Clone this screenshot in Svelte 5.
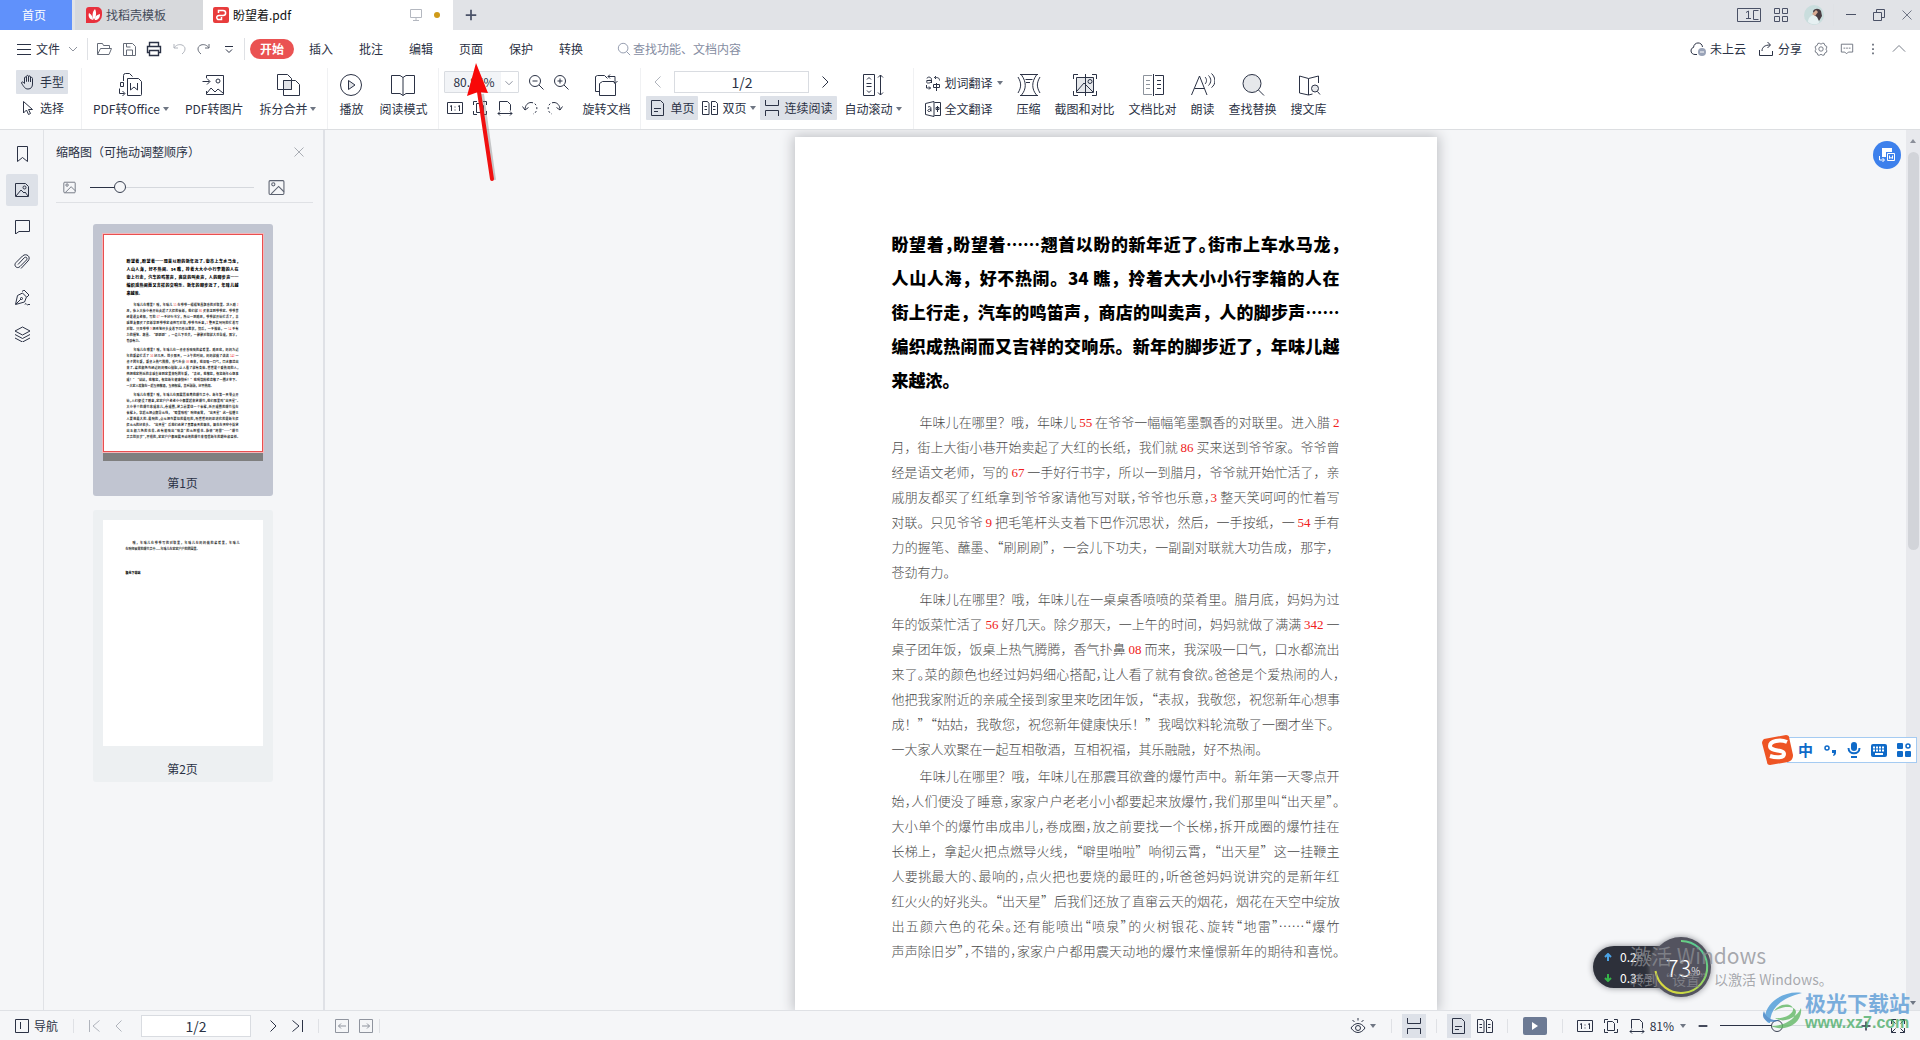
<script lang="ts">
  let zoom = $state(43);
  let thumbSize = $state(16);

  // Each icon is SVG markup on a 16 or 24 unit grid, drawn in currentColor.
  const icons: Record<string, string> = {
    menu: '<path d="M1 3.5h14M1 8.5h14M1 13.5h14"/>',
    down: '<path d="M4 6l4 4 4-4"/>',
    up: '<path d="M1 11l7-7 7 7"/>',
    folder: '<path d="M1.5 13.500V2.500h5l1 2h6v3M1.500 13.500l3-6h11l-2.500 6z"/>',
    save: '<path d="M2.500 2.500h9l3 3v9h-12zM5.500 14v-5h6v5M5.500 3v3h4"/>',
    print: '<path d="M3.500 5V1.500h9V5M3.500 11.500h-2v-6h13v6h-2M3.500 9.500h9v5h-9z" stroke-width="1.400"/>',
    undo: '<path d="M3 3v4h4M3 7c2-3 5-4 8-3 4 1.500 4 6 0 9"/>',
    redo: '<path d="M13 3v4h-4M13 7c-2-3-5-4-8-3-4 1.500-4 6 0 9"/>',
    more: '<path d="M4 5.500h8M5 8.500l3 3 3-3"/>',
    search: '<circle cx="7" cy="7" r="5.500"/><path d="M11 11l4 4"/>',
    cloud: '<path d="M7 13.500H5C0 13.500 0 7 3.500 6.500 4 0.500 12 0.500 12.500 6"/><circle cx="12" cy="11" r="4" fill="#99a3b8" stroke="none"/><path d="M10 11h4" stroke="#fff"/>',
    share: '<path d="M1.500 9v5.500h13V10M4 10c0-4 3-6 8-6M9.500 1l3 3-3 3"/>',
    gear: '<path d="M4.500 1.500h2l1.500 1 1.500-1h2l1 2.500 2 1v2l-1 1 1 1.500v2l-2 1-1 2.500h-2l-1.500-1-1.500 1h-2l-1-2.500-2-1v-2l1-1.500-1-1v-2l2-1z"/><circle cx="8" cy="8" r="2.500"/>',
    chat: '<path d="M1.500 2.500h13v9h-5l-2 2-2-2h-4zM4 7h2M7 7h2M10 7h2"/>',
    dots: '<path d="M8 2v2M8 7v2M8 12v2" stroke-width="2"/>',
    hand: '<path d="M4.500 9.500V4c0-1.500 2-1.500 2 0v3.500V2.500c0-1.500 2-1.500 2 0v5V3c0-1.500 2-1.500 2 0v5V4.500c0-1.500 2-1.500 2 0V10c0 3-1.500 5-4.500 5-3 0-4-2-6.500-6 0-1.500 1.500-1.500 3 .500z"/>',
    select: '<path d="M3.500 1.500v11.500l3-3 2 4.500 2-1-2-4h4z"/>',
    zoomOut: '<circle cx="7" cy="7" r="5.500"/><path d="M11 11l4.500 4.500M4.500 7h5"/>',
    zoomIn: '<circle cx="7" cy="7" r="5.500"/><path d="M11 11l4.500 4.500M4.500 7h5M7 4.500v5"/>',
    actual: '<path d="M.500 2.500h15v11h-15z"/><path d="M3 6.500l1.500-1V11M11 6.500l1.500-1V11M8 6.500v1M8 9.500v1"/>',
    fitPage: '<path d="M1.500 5V1.500H5M11 1.500h3.500V5M1.500 11v3.500H5M11 14.500h3.500V11M4.500 3.500h5l2 2v7h-7z"/>',
    fitWidth: '<path d="M2.500 10.500v-9h8l3 3v6M1 13.500h14M3 11.500l-2 2 2 2M13 11.500l2 2-2 2"/>',
    rotL: '<path d="M.500 6.500l2.500 3.500 3.500-2.500M3 10c0-5 3-7.500 6-7.500"/><path d="M9 2.500c7.500 0 7.500 10 2 11.500" stroke-dasharray="2 2"/>',
    rotR: '<path d="M15.500 6.500l-2.500 3.500-3.500-2.500M13 10c0-5-3-7.500-6-7.500"/><path d="M7 2.500c-7.500 0-7.500 10-2 11.500" stroke-dasharray="2 2"/>',
    single: '<path d="M1.500 .500h9l3 3v12h-12zM4 8.500h7M4 11.500h4"/>',
    double: '<path d="M.500 1.500h5l1.500 2v11h-6.500zM9.500 1.500h4l2 2v11h-6zM2.500 6.500h2.500M2.500 9.500h2.500M11 6.500h2.500M11 9.500h2.500"/>',
    scroll: '<path d="M1.500 0v5.500h13V0M1.500 16v-5.500h13V16"/>',
    prev: '<path d="M10.500 2.500L5 8l5.500 5.500"/>',
    next: '<path d="M5.500 2.500L11 8l-5.500 5.500"/>',
    first: '<path d="M2.500 2v12M12.500 2.500L6 8l6.500 5.500"/>',
    last: '<path d="M13.500 2v12M3.500 2.500L10 8l-6.500 5.500"/>',
    back: '<path d="M1.500 1.500h13v13h-13zM12 8H4.500M7 5.500L4.500 8 7 10.500"/>',
    forward: '<path d="M1.500 1.500h13v13h-13zM4 8h7.500M9 5.500L11.500 8 9 10.500"/>',
    word: '<path d="M1.500 5.500h5v-1c0-3-4.500-3-4.500-1M6.500 5v3M6.500 5.500c-6-1-6 3-3 2.500 2 0 3-1 3-2M11 1L9.500 2.500 11 4M9.500 2.500c3 0 5 0 5 3M1.500 10v3h4M4 11.500L5.500 13 4 14.500M8.500 9.500h6v3h-6zM11.500 8v8"/>',
    full: '<path d="M9.500 1.500h6v13h-6M9 .500L.500 2.500v11l8.500 2zM3 6c3-1 3 0 3 4.500M6 8c-4 0-4 3-1.500 2.500L6 9M11 6.500h3v2h-3zM12.500 5v6"/>',
    nav: '<path d="M1.500 1.500h13v13h-13zM6.500 4v7"/>',
    eye: '<path d="M1 10c4-6 10-6 14 0-4 6-10 6-14 0zM8 0v2.500M2.500 2l2 2M13.500 2l-2 2"/><circle cx="8" cy="10" r="2.500"/>',
    bookmark: '<path d="M3.500 .500h10v15l-5-4-5 4z"/>',
    picture: '<path d="M1.500 1.500h10l3 3v10h-13zM2 14l5-6 3 3 1-1 3 4"/><circle cx="10.500" cy="5.500" r="1.500"/>',
    image: '<rect x="1" y="1.500" width="14" height="13" rx="1"/><path d="M3 14l7-7 5 5"/><circle cx="5" cy="5" r="1.500"/>',
    comment: '<path d="M1.500 2.500h14v11H5l-3.500 2.500z"/>',
    clip: '<path d="M4 10.500L10 4c2-2 4 0 2.500 2L6 12.500c-3 3-7-1-4-4L8.500 2c4-3.500 9 1 5.500 5l-7 7.500"/>',
    pen: '<path d="M1.500 14.500l2-9 5-2.500 4 4-2 5zM8 1.500l2-1.500 5 5-2 2M2 14l5-5M11 14.500c1-3 2 2 3 0h2"/><circle cx="7.500" cy="8.500" r="1"/>',
    layers: '<path d="M8.500 1l7.500 4-7.500 4L1 5zM1 8.500l7.500 4 7.500-4M1 12l7.500 4 7.500-4"/>',
    close: '<path d="M2 2l12 12M14 2L2 14"/>',
    monitor: '<path d="M2.500 2.500h11v8h-11zM8 10.500v3M5 13.500h6"/>',
    plus: '<path d="M8 2v12M2 8h12" stroke-width="2"/>',
    minus: '<path d="M3 8h10" stroke-width="2"/>',
    min: '<path d="M3 7.500h10"/>',
    restore: '<path d="M2.500 5.500h8v8h-8zM5.500 5V2.500h8v8H11"/>',
    grid: '<path d="M1.500 1.500h5v5h-5zM9.500 1.500h5v5h-5zM1.500 9.500h5v5h-5zM9.500 9.500h5v5h-5z"/>',
    expand: '<path d="M1.500 6V1.500H6M1.500 1.500l4 4M10 1.500h4.500V6M14.500 1.500l-4 4M1.500 10v4.500H6M1.500 14.500l4-4M10 14.500h4.500V10M14.500 14.500l-4-4"/>',
    office: '<path d="M8.500 5.500h11l3 3v13a1 1 0 0 1-1 1h-13zM11.500 10v7l3.500-3 3.500 3v-7M4.500 8V2.500a2 2 0 0 1 2-2h4l3 3M4.500 9.500h-3v4h3zM.500 15.500v5h5M3.500 18l2.500 2.500L3.500 23"/>',
    toImage: '<path d="M4.500 5V2.500h17v19h-17V18M.500 8.500h7M5 5.500l3 3-3 3M5 20l4-5 4 4 3-3 5 4"/><circle cx="16" cy="8" r="2"/>',
    split: '<path d="M1.500 1.500h10l4 4v11h-14z"/><path d="M7.500 7.500h12l4 4v11h-16z"/><path d="M7.500 7.500h8v9h-8z" fill="#e2e4e8"/>',
    play: '<circle cx="12" cy="12" r="10.500"/><path d="M9.500 7.500l6.500 4.500-6.500 4.500z" fill="#e2e4e8"/>',
    book: '<path d="M.500 2.500H9l3 2 3-2h8.500v18H15l-3 2-3-2H.500zM12 4.500v18"/>',
    rotate: '<path d="M5 18.500H1.500v-15l2-1h7l3 3M5.500 10.500l3-2h11l2 2v12h-16zM16 1.500l-2 2 2 2M14 3.500h7v7M19 8l2 2.500L23.500 8"/>',
    autoScroll: '<path d="M2.500 1.500h11v21h-11zM5.500 10.500h5M5.500 13.500h5M6 6.500L8 4.500l2 2M6 17.500l2 2 2-2M19.500 2v20M17 4.500l2.500-2.500L22 4.500M17 19.500l2.500 2.500 2.500-2.500"/>',
    compress: '<path d="M3 1.500h18M3 22.500h18M4.500 2c5 7 5 14 0 20M19.500 2c-5 7-5 14 0 20M1 4c3.500 6 3.500 10 0 16M23 4c-3.500 6-3.500 10 0 16M8.500 6.500h7M9 9.500h4"/>',
    compare: '<path d="M3.500 4.500h17v15h-17z" fill="#e6e8eb"/><path d="M.500 6V1.500H5M19 1.500h4.500V6M.500 18v4.500H5M19 22.500h4.500V18M12.500 1v22M4 18l7-8 5 5 4 4"/><circle cx="17" cy="8.500" r="2"/>',
    docDiff: '<path d="M11 2.500H2.500v19H11M5 7.500h4M5 11.500h4M5 15.500h4" stroke="#8d939c"/><path d="M12.500 1v22M14 2.500h8.500v19H14M16 7.500h4M16 11.500h4M16 15.500h4"/>',
    read: '<path d="M.500 22L8.500 3l7.500 19M3.500 15.500h10M14 4c2 2 2 5 0 7M17.500 2.500c3 3 3 7 0 10M20.500 .500c4.500 4 4.500 11 0 14"/>',
    find: '<circle cx="11" cy="10.500" r="9" fill="#e6e8eb"/><path d="M17.500 17l5.500 5.500"/>',
    library: '<path d="M11.500 5.500l-9-2.500v17l9 2zM11.500 5.500l10-2.500v7M11.500 22l4-1"/><circle cx="18" cy="15.500" r="3.500" fill="#e6e8eb"/><path d="M20.500 18.500l2.500 3"/>'
  };

  type Line = { t: string; tight?: boolean; first?: boolean; last?: boolean };
  const heading: Line[] = [
    { t: '盼望着，盼望着……翘首以盼的新年近了。街市上车水马龙，', tight: true },
    { t: '人山人海，好不热闹。34 瞧，拎着大大小小行李箱的人在' },
    { t: '街上行走，汽车的鸣笛声，商店的叫卖声，人的脚步声……' },
    { t: '编织成热闹而又吉祥的交响乐。新年的脚步近了，年味儿越' },
    { t: '来越浓。', last: true }
  ];
  const paragraphs: Line[][] = [
    [
      { t: '年味儿在哪里？哦，年味儿 55 在爷爷一幅幅笔墨飘香的对联里。进入腊 2', first: true },
      { t: '月，街上大街小巷开始卖起了大红的长纸，我们就 86 买来送到爷爷家。爷爷曾' },
      { t: '经是语文老师，写的 67 一手好行书字，所以一到腊月，爷爷就开始忙活了，亲' },
      { t: '戚朋友都买了红纸拿到爷爷家请他写对联，爷爷也乐意，3 整天笑呵呵的忙着写', tight: true },
      { t: '对联。只见爷爷 9 把毛笔杆头支着下巴作沉思状，然后，一手按纸，一 54 手有' },
      { t: '力的握笔、蘸墨、“刷刷刷”，一会儿下功夫，一副副对联就大功告成，那字，' },
      { t: '苍劲有力。', last: true }
    ],
    [
      { t: '年味儿在哪里？哦，年味儿在一桌桌香喷喷的菜肴里。腊月底，妈妈为过', first: true },
      { t: '年的饭菜忙活了 56 好几天。除夕那天，一上午的时间，妈妈就做了满满 342 一' },
      { t: '桌子团年饭，饭桌上热气腾腾，香气扑鼻 08 而来，我深吸一口气，口水都流出' },
      { t: '来了。菜的颜色也经过妈妈细心搭配，让人看了就有食欲。爸爸是个爱热闹的人，', tight: true },
      { t: '他把我家附近的亲戚全接到家里来吃团年饭，“表叔，我敬您，祝您新年心想事' },
      { t: '成！”“姑姑，我敬您，祝您新年健康快乐！”我喝饮料轮流敬了一圈才坐下。' },
      { t: '一大家人欢聚在一起互相敬酒，互相祝福，其乐融融，好不热闹。', last: true }
    ],
    [
      { t: '年味儿在哪里？哦，年味儿在那震耳欲聋的爆竹声中。新年第一天零点开', first: true },
      { t: '始，人们便没了睡意，家家户户老老小小都要起来放爆竹，我们那里叫“出天星”。', tight: true },
      { t: '大小单个的爆竹串成串儿，卷成圈，放之前要找一个长梯，拆开成圈的爆竹挂在', tight: true },
      { t: '长梯上，拿起火把点燃导火线，“噼里啪啦”响彻云霄，“出天星”这一挂鞭主' },
      { t: '人要挑最大的、最响的，点火把也要烧的最旺的，听爸爸妈妈说讲究的是新年红', tight: true },
      { t: '红火火的好兆头。“出天星”后我们还放了直窜云天的烟花，烟花在天空中绽放' },
      { t: '出五颜六色的花朵。还有能喷出“喷泉”的火树银花、旋转“地雷”……“爆竹', tight: true },
      { t: '声声除旧岁”，不错的，家家户户都用震天动地的爆竹来憧憬新年的期待和喜悦。', tight: true }
    ]
  ];
  const menus = ['插入', '批注', '编辑', '页面', '保护', '转换'];
  const rail = [
    ['bookmark', '书签'],
    ['picture', '缩略图'],
    ['comment', '批注'],
    ['clip', '附件'],
    ['pen', '签名'],
    ['layers', '图层']
  ];
</script>

{#snippet icon(name: string, size = 16, grid = 16)}
  <svg width={size} height={size} viewBox="0 0 {grid} {grid}" fill="none" stroke="currentColor" aria-hidden="true">{@html icons[name]}</svg>
{/snippet}

{#snippet caret()}
  <svg width="6" height="4" viewBox="0 0 6 4" aria-hidden="true"><path d="M0 0h6L3 4z" fill="#6f7683" /></svg>
{/snippet}

{#snippet tool(name: string, label: string, drop = false)}
  <button class="tool">
    {@render icon(name, 24, 24)}
    <span class="tool-label">{label}{#if drop}{@render caret()}{/if}</span>
  </button>
{/snippet}

{#snippet lineText(l: Line)}
  <span class="line" class:tight={l.tight} class:first={l.first} class:last={l.last}>
    {#each l.t.split(/(\d+)/) as part}{#if /^\d/.test(part)}<span class="num">{part}</span>{:else}{part}{/if}{/each}
  </span>
{/snippet}

{#snippet article()}
  <h1>{#each heading as l}{@render lineText(l)}{/each}</h1>
  {#each paragraphs as p}
    <p>{#each p as l}{@render lineText(l)}{/each}</p>
  {/each}
{/snippet}

<div class="app">
  <header>
    <div class="titlebar">
      <button class="tab home">首页</button>
      <button class="tab templates">
        <svg width="16" height="16" viewBox="0 0 16 16" aria-hidden="true">
          <path d="M3 0h8a5 5 0 0 1 5 5v3a8 8 0 0 1-8 8H0V3a3 3 0 0 1 3-3z" fill="#e8303c" />
          <path d="M8 13C6 10 6 5 9 2c2 4 1 8-1 11zM7 13C3 12 2 9 3 6c3 2 4 4 4 7zM9 13c0-3 1-5 5-6 0 4-2 6-5 6z" fill="#fff" />
        </svg>
        找稻壳模板
      </button>
      <button class="tab doc">
        <svg width="16" height="16" viewBox="0 0 16 16" aria-hidden="true">
          <rect width="16" height="16" rx="2" fill="#e83c3c" />
          <path d="M5.500 6V3.500H10c3.500 0 3.500 5 0 5H6c-3.500 0-2.500 4.500 0 4h2.500V10" fill="none" stroke="#fff" stroke-width="1.500" />
        </svg>
        <span class="doc-name">盼望着.pdf</span>
        <span class="tab-monitor">{@render icon('monitor')}</span>
        <span class="unsaved"></span>
      </button>
      <button class="add" aria-label="新建标签">{@render icon('plus', 14)}</button>
      <div class="window-tools">
        <button class="layout-button" aria-label="窗口布局">
          <svg width="24" height="14" viewBox="0 0 24 14" fill="none" stroke="currentColor" aria-hidden="true">
            <path d="M.5.5h23v13H.5zM21.500 2.500h-5v9h5M9 4.500l2.500-1.500v7.500M9 10.500h5" />
          </svg>
        </button>
        <button aria-label="应用">{@render icon('grid')}</button>
        <svg class="avatar" width="20" height="20" viewBox="0 0 20 20" aria-hidden="true">
          <circle cx="10" cy="10" r="10" fill="#c9dddd" />
          <path d="M4 17c0-4 3-7 6-7l4 2 1 6a10 10 0 0 1-11-1z" fill="#e6f0f2" />
          <path d="M9 6c2-3 6-3 8 0l1 5-3 5-2-4-3-2z" fill="#493c42" />
          <path d="M8 9l4-4 2 2-3 4z" fill="#d8a992" />
        </svg>
        <i class="sep"></i>
        <button class="win" aria-label="最小化">{@render icon('min')}</button>
        <button class="win" aria-label="还原">{@render icon('restore')}</button>
        <button class="win" aria-label="关闭">{@render icon('close', 12)}</button>
      </div>
    </div>

    <nav class="menubar">
      <button class="file">{@render icon('menu')}<span>文件</span><span class="muted">{@render icon('down')}</span></button>
      <i class="sep"></i>
      <div class="quick">
        <button class="mid" aria-label="打开">{@render icon('folder')}</button>
        <button class="mid" aria-label="保存">{@render icon('save')}</button>
        <button aria-label="打印">{@render icon('print')}</button>
        <button class="faint" aria-label="撤销">{@render icon('undo')}</button>
        <button class="mid" aria-label="重做">{@render icon('redo')}</button>
        <button aria-label="更多">{@render icon('more')}</button>
      </div>
      <i class="sep"></i>
      <button class="active-menu">开始</button>
      {#each menus as m}<button class="menu">{m}</button>{/each}
      <label class="search">{@render icon('search', 14)}<input placeholder="查找功能、文档内容" aria-label="查找功能、文档内容" /></label>
      <div class="account">
        <button class="cloud">{@render icon('cloud')}未上云</button>
        <button class="share">{@render icon('share')}分享</button>
        <button class="mid" aria-label="设置">{@render icon('gear', 14)}</button>
        <button class="mid" aria-label="反馈">{@render icon('chat', 14)}</button>
        <button class="mid" aria-label="更多选项">{@render icon('dots', 14)}</button>
        <button class="mid" aria-label="收起功能区">{@render icon('up', 14)}</button>
      </div>
    </nav>

    <div class="ribbon">
      <div class="group modes">
        <button class="chip on">{@render icon('hand')}手型</button>
        <button class="chip">{@render icon('select')}选择</button>
      </div>
      <div class="group">
        {@render tool('office', 'PDF转Office', true)}
        {@render tool('toImage', 'PDF转图片')}
        {@render tool('split', '拆分合并', true)}
      </div>
      <div class="group">
        {@render tool('play', '播放')}
        {@render tool('book', '阅读模式')}
      </div>
      <div class="group view">
        <div class="stack">
          <div class="row zoom-row">
            <div class="zoom-box">
              <select aria-label="缩放比例"><option>80.86%</option></select>
              <span class="zoom-arrow">{@render icon('down', 14)}</span>
            </div>
            <button aria-label="缩小">{@render icon('zoomOut')}</button>
            <button aria-label="放大">{@render icon('zoomIn')}</button>
          </div>
          <div class="row fit-row">
            <button aria-label="实际大小">{@render icon('actual')}</button>
            <button aria-label="适合页面">{@render icon('fitPage')}</button>
            <button aria-label="适合宽度">{@render icon('fitWidth')}</button>
            <button aria-label="向左旋转">{@render icon('rotL')}</button>
            <button aria-label="向右旋转">{@render icon('rotR')}</button>
          </div>
        </div>
        {@render tool('rotate', '旋转文档')}
      </div>
      <div class="group paging">
        <div class="stack">
          <div class="row page-row">
            <button class="faint" aria-label="上一页">{@render icon('prev')}</button>
            <input class="page-input" value="1/2" aria-label="页码" />
            <button aria-label="下一页">{@render icon('next')}</button>
          </div>
          <div class="row">
            <button class="chip on">{@render icon('single')}单页</button>
            <button class="chip">{@render icon('double')}双页{@render caret()}</button>
            <button class="chip on">{@render icon('scroll')}连续阅读</button>
          </div>
        </div>
        {@render tool('autoScroll', '自动滚动', true)}
      </div>
      <div class="group last-group">
        <div class="stack translate">
          <button class="inline">{@render icon('word')}划词翻译{@render caret()}</button>
          <button class="inline">{@render icon('full')}全文翻译</button>
        </div>
        {@render tool('compress', '压缩')}
        {@render tool('compare', '截图和对比')}
        {@render tool('docDiff', '文档比对')}
        {@render tool('read', '朗读')}
        {@render tool('find', '查找替换')}
        {@render tool('library', '搜文库')}
      </div>
    </div>
  </header>

  <div class="workspace">
    <nav class="rail" aria-label="侧栏">
      {#each rail as [name, label], i}
        <button class:on={i === 1} aria-label={label}>{@render icon(name)}</button>
      {/each}
    </nav>

    <aside class="panel">
      <div class="panel-head">
        <span>缩略图（可拖动调整顺序）</span>
        <button class="muted" aria-label="关闭侧栏">{@render icon('close', 12)}</button>
      </div>
      <div class="size-row">
        {@render icon('image', 13)}
        <input type="range" class="thin" bind:value={thumbSize} style="--fill: {thumbSize}%" aria-label="缩略图大小" />
        {@render icon('image', 17)}
      </div>
      <div class="thumbs">
        <button class="thumb current" aria-label="第1页">
          <span class="sheet outlined"><span class="mini">{@render article()}</span></span>
          <span class="strip"></span>
          <span class="caption">第1页</span>
        </button>
        <button class="thumb" aria-label="第2页">
          <span class="sheet"><span class="mini second">
            <span class="line first">哦，年味儿在爷爷写的对联里，年味儿在妈妈做的菜肴里，年味儿</span>
            <span class="line last">在响彻云霄的爆竹声中——年味儿在家家户户的团圆里。</span>
            <b class="sign">极光下载站</b>
          </span></span>
          <span class="caption">第2页</span>
        </button>
      </div>
    </aside>

    <main class="canvas">
      <article class="page">{@render article()}</article>
      <button class="convert" aria-label="转换文档">
        <svg width="16" height="16" viewBox="0 0 16 16" fill="none" stroke="#fff" aria-hidden="true">
          <path d="M3 1h10v4H7v5H3z" fill="#fff" stroke="none" />
          <path d="M8.500 6.500h7v7h-7zM10.500 8.500v3l1.500-1 1.500 1v-3M.500 9v4H5M3.500 11L5.500 13l-2 2" />
        </svg>
      </button>
    </main>

    <div class="scrollbar" aria-hidden="true">
      <svg width="6" height="4" viewBox="0 0 6 4"><path d="M0 4h6L3 0z" fill="#8b8f99" /></svg>
      <span class="grip"></span>
      {@render caret()}
    </div>
  </div>

  <footer>
    <button class="nav-button">{@render icon('nav')}导航</button>
    <i class="sep"></i>
    <div class="pager">
      <button class="faint" aria-label="第一页">{@render icon('first')}</button>
      <button class="faint" aria-label="前一页">{@render icon('prev')}</button>
      <input class="page-input" value="1/2" aria-label="当前页" />
      <button aria-label="后一页">{@render icon('next')}</button>
      <button aria-label="最后一页">{@render icon('last')}</button>
    </div>
    <i class="sep"></i>
    <div class="history">
      <button class="muted" aria-label="后退">{@render icon('back')}</button>
      <button class="muted" aria-label="前进">{@render icon('forward')}</button>
    </div>
    <i class="sep"></i>
    <div class="status-right">
      <button class="eye-button" aria-label="护眼模式">{@render icon('eye')}{@render caret()}</button>
      <i class="sep"></i>
      <button class="square on" aria-label="连续阅读">{@render icon('scroll')}</button>
      <i class="sep"></i>
      <div class="pair">
        <button class="square on" aria-label="单页">{@render icon('single')}</button>
        <button class="square" aria-label="双页">{@render icon('double')}</button>
      </div>
      <i class="sep"></i>
      <button class="present" aria-label="播放"><svg width="8" height="8" viewBox="0 0 8 8" aria-hidden="true"><path d="M1 0l6 4-6 4z" fill="#fff" /></svg></button>
      <i class="sep"></i>
      <div class="fits">
        <button aria-label="实际大小">{@render icon('actual')}</button>
        <button aria-label="适合页面">{@render icon('fitPage')}</button>
        <button aria-label="适合宽度">{@render icon('fitWidth')}</button>
      </div>
      <button class="percent">81%{@render caret()}</button>
      <button aria-label="缩小">{@render icon('minus', 14)}</button>
      <input type="range" class="zoom-range" bind:value={zoom} style="--fill: {zoom}%" aria-label="缩放" />
      <button aria-label="放大">{@render icon('plus', 12)}</button>
      <button class="expand" aria-label="全屏">{@render icon('expand')}</button>
    </div>
  </footer>

  <svg class="pointer" width="48" height="132" viewBox="0 0 48 132" aria-hidden="true">
    <path d="M16 32l12 86" stroke="#7d7d7d" stroke-opacity=".4" stroke-width="4" />
    <path d="M13 30l13 87" stroke="#f01010" stroke-width="4" stroke-linecap="round" />
    <path d="M10 1L1 34l11-4 10 1z" fill="#f80808" />
  </svg>

  <div class="ime">
    <svg class="ime-logo" width="32" height="32" viewBox="0 0 32 32" aria-hidden="true">
      <path d="M3 5L25 1c2 0 3 1 3 2l4 18c0 4-2 6-5 7L9 31c-2 0-3-1-3-3L1 9c0-2 1-3 2-4z" fill="#ee5424" />
      <path d="M26 8c-7-3-17-1-17 4 0 6 14 3 14 8 0 4-8 4-14 2" fill="none" stroke="#fff" stroke-width="4" />
    </svg>
    <div class="ime-bar">
      <button class="ime-mode">中</button>
      <button aria-label="标点"><svg width="14" height="14" viewBox="0 0 14 14" aria-hidden="true"><circle cx="4" cy="5" r="2" fill="none" stroke="#0f6ac8" stroke-width="1.500" /><path d="M9 7h4v3c0 2-2 3-3 3l1-3H9z" fill="#0f6ac8" /></svg></button>
      <button aria-label="语音"><svg width="14" height="16" viewBox="0 0 14 16" fill="none" stroke="#0f6ac8" stroke-width="2" aria-hidden="true"><rect x="4" y="0" width="6" height="9" rx="3" fill="#0f6ac8" stroke="none" /><path d="M1.500 6c0 7 11 7 11 0M4 15h6" /></svg></button>
      <button aria-label="键盘"><svg width="16" height="14" viewBox="0 0 16 14" aria-hidden="true"><rect width="16" height="13" y="1" rx="2" fill="#0f6ac8" /><path d="M2 4.500h12M2 7.500h12" stroke="#fff" stroke-width="2" stroke-dasharray="2 1" /><path d="M4 11h8" stroke="#fff" stroke-width="2" /></svg></button>
      <button aria-label="工具箱"><svg width="14" height="14" viewBox="0 0 14 14" fill="#0f6ac8" aria-hidden="true"><rect width="6" height="6" rx="1" /><rect y="8" width="6" height="6" rx="1" /><rect x="8" y="8" width="6" height="6" rx="1" /><circle cx="11" cy="3" r="2" fill="none" stroke="#0f6ac8" stroke-width="1.500" /></svg></button>
    </div>
  </div>

  <div class="monitor">
    <div class="speeds">
      <span><svg width="8" height="8" viewBox="0 0 8 8" fill="none" stroke="#4ba3e6" stroke-width="2" aria-hidden="true"><path d="M4 8V1M1 4l3-3 3 3" /></svg>0.2<small>K/s</small></span>
      <span><svg width="8" height="8" viewBox="0 0 8 8" fill="none" stroke="#35b449" stroke-width="2" aria-hidden="true"><path d="M4 0v7M1 4l3 3 3-3" /></svg>0.3<small>K/s</small></span>
    </div>
    <div class="dial">
      <svg width="60" height="60" viewBox="0 0 60 60" fill="none" stroke-width="2" aria-hidden="true">
        <defs>
          <linearGradient id="dial-ring" x1="0" y1="1" x2="1" y2="0">
            <stop offset="0" stop-color="#e6d83c" /><stop offset=".4" stop-color="#b9d84a" /><stop offset="1" stop-color="#38c9a8" />
          </linearGradient>
        </defs>
        <path d="M30 4a26 26 0 1 1-25.500 30" stroke="url(#dial-ring)" />
      </svg>
      <span class="load">73<small>%</small></span>
    </div>
  </div>

  <div class="activation">
    <div class="act-title">激活 Windows</div>
    <div>转到“设置”以激活 Windows。</div>
  </div>

  <div class="site-mark">
    <svg width="42" height="38" viewBox="0 0 42 38" fill="none" aria-hidden="true">
      <path d="M40 2C24-1 4 10 3 26c0 4 3 6 5 6C8 16 22 6 40 2z" fill="#4b9ad8" />
      <path d="M12 20c6-9 20-8 19-1-1 5-10 9-18 8 8 6 22 0 26-10 2 14-14 25-30 18 12 0 24-6 25-14 0-6-12-7-22-1z" fill="#62b865" />
      <path d="M2 20c-4 8 4 14 16 9-8 1-14-2-16-9z" fill="#3a7fc4" />
    </svg>
    <div>
      <div class="site-name">极光下载站</div>
      <div class="site-url">www.xz7.com</div>
    </div>
  </div>
</div>

<style>
  :global(body) {
    margin: 0;
    overflow: hidden;
  }
  .app {
    --ink: #2b3245;
    position: relative;
    display: flex;
    flex-direction: column;
    height: 100vh;
    min-height: 600px;
    overflow: hidden;
    background: #f5f6f8;
    color: var(--ink);
    font: 12px/16px 'Noto Sans CJK SC', sans-serif;
  }
  button,
  input,
  select {
    margin: 0;
    padding: 0;
    border: 0;
    background: none;
    color: inherit;
    font: inherit;
    outline: none;
  }
  button {
    display: flex;
    align-items: center;
    flex: none;
    white-space: nowrap;
  }
  svg {
    display: block;
    flex: none;
  }
  .sep {
    flex: none;
    width: 1px;
    height: 22px;
    background: #dfe1e5;
  }
  .muted { color: #8f949e; }
  .faint { color: #b0b4bc; }
  .mid { color: #666c78; }

  .titlebar {
    display: flex;
    height: 30px;
    background: #e1e3e7;
  }
  .tab { font-size: 13px; }
  .home {
    box-sizing: border-box;
    width: 72px;
    justify-content: center;
    margin-right: 3px;
    padding-right: 4px;
    background: #6091fb;
    color: #fff;
    font-size: 12px;
  }
  .templates {
    width: 128px;
    padding-left: 11px;
    gap: 4px;
    background: #d7d9dc;
    color: #444b5a;
    font-size: 12px;
  }
  .doc {
    width: 250px;
    padding: 0 13px 0 10px;
    gap: 4px;
    background: #fff;
    color: #111;
    font-size: 12px;
  }
  .doc-name { flex: 1; text-align: left; }
  .tab-monitor { color: #b4b8c0; }
  .unsaved {
    width: 6px;
    height: 6px;
    margin-left: 6px;
    border-radius: 50%;
    background: #cf9a18;
  }
  .add { padding: 0 11px; color: #4a5268; }
  .window-tools {
    display: flex;
    align-items: center;
    gap: 9px;
    margin-left: auto;
    padding-right: 5px;
    color: #4a5166;
  }
  .layout-button { margin-right: 3px; }
  .avatar { margin-left: 6px; }
  .win { width: 16px; justify-content: center; }
  .win + .win { margin-left: 3px; }

  .menubar {
    display: flex;
    align-items: center;
    height: 38px;
    padding: 0 14px 0 16px;
    background: #fff;
  }
  .file { gap: 4px; margin-right: 6px; }
  .file .muted { margin-left: 1px; }
  .quick {
    display: flex;
    gap: 9px;
    padding: 0 7px 0 8px;
  }
  .active-menu {
    height: 20px;
    margin: 0 14px 0 5px;
    padding: 0 10px;
    border-radius: 10px;
    background: #ea5252;
    color: #fff;
    font-weight: 700;
  }
  .menu { width: 50px; padding-left: 1px; }
  .search {
    display: flex;
    align-items: center;
    gap: 2px;
    margin-left: 9px;
    color: #8790a5;
  }
  .search input { width: 140px; }
  .search input::placeholder { color: #858da2; opacity: 1; }
  .account {
    display: flex;
    align-items: center;
    gap: 12px;
    margin-left: auto;
  }
  .cloud, .share { gap: 4px; }

  .ribbon {
    display: flex;
    height: 61px;
    background: #fff;
    border-bottom: 1px solid #dcdee1;
  }
  .group {
    display: flex;
    gap: 16px;
    padding: 2px 11px 4px;
    border-right: 1px solid #f0f1f3;
  }
  .modes {
    flex-direction: column;
    gap: 2px;
    padding: 2px 13px 0 16px;
  }
  .chip {
    height: 24px;
    gap: 4px;
    padding: 0 4px;
    border-radius: 1px;
  }
  .on { background: #dde1e8; }
  .tool {
    flex-direction: column;
    gap: 4px;
    padding-top: 3px;
  }
  .tool-label {
    display: flex;
    align-items: center;
    gap: 3px;
  }
  .view { padding-left: 5px; padding-right: 10px; gap: 13px; }
  .stack { display: flex; flex-direction: column; gap: 2px; }
  .row { display: flex; align-items: center; height: 24px; }
  .zoom-row { gap: 9px; }
  .zoom-box {
    display: flex;
    box-sizing: border-box;
    width: 75px;
    height: 22px;
    border: 1px solid #d9dce1;
    border-radius: 1px;
  }
  .zoom-box select {
    width: 56px;
    padding-left: 8px;
    appearance: none;
    background: #f2f4f7;
  }
  .zoom-arrow { padding: 4px 1px; color: #7e8491; }
  .fit-row { gap: 9px; padding-left: 3px; }
  .paging { padding-left: 5px; gap: 8px; }
  .page-row { gap: 8px; padding-left: 4px; }
  .page-input {
    box-sizing: border-box;
    height: 22px;
    border: 1px solid #d9dce1;
    background: #fff;
    font-size: 14px;
    text-align: center;
  }
  .page-row .page-input { width: 135px; }
  .last-group { border: 0; gap: 14px; }
  .inline { height: 25px; gap: 4px; }
  .translate { gap: 1px; }

  .workspace {
    display: flex;
    flex: 1;
    min-height: 0;
  }
  .rail {
    display: flex;
    flex-direction: column;
    align-items: center;
    gap: 4px;
    box-sizing: border-box;
    width: 44px;
    padding-top: 8px;
    border-right: 1px solid #e0e2e6;
  }
  .rail button {
    width: 32px;
    height: 32px;
    justify-content: center;
    border-radius: 2px;
  }
  .panel {
    box-sizing: border-box;
    width: 281px;
    padding: 0 10px 0 12px;
    border-right: 2px solid #dfe1e6;
  }
  .panel-head {
    display: flex;
    align-items: center;
    justify-content: space-between;
    height: 44px;
    padding-right: 8px;
  }
  .size-row {
    display: flex;
    align-items: center;
    gap: 14px;
    height: 26px;
    padding: 0 28px 2px 7px;
    border-bottom: 1px solid #dfe1e5;
    color: #5c6270;
  }
  input[type='range'] {
    appearance: none;
    height: 12px;
    background: linear-gradient(to right, var(--ink) var(--fill), #d5d8dd var(--fill)) center / 100% 1px no-repeat;
  }
  input[type='range']::-webkit-slider-thumb {
    appearance: none;
    box-sizing: border-box;
    width: 12px;
    height: 12px;
    border: 1px solid #3a4152;
    border-radius: 50%;
    background: #f5f6f8;
  }
  .thin { flex: 1; min-width: 0; }
  .thumbs {
    display: flex;
    flex-direction: column;
    align-items: center;
    gap: 14px;
    padding: 21px 4px 0 0;
  }
  .thumb {
    flex-direction: column;
    box-sizing: border-box;
    width: 180px;
    height: 272px;
    padding: 10px 0 5px;
    border-radius: 3px;
    background: #edf0f2;
  }
  .current { background: #c1c5d1; }
  .sheet {
    box-sizing: border-box;
    width: 160px;
    height: 226px;
    background: #fff;
  }
  .outlined {
    height: 218px;
    border: 1px solid #e94f4f;
    box-shadow: 0 0 0 1px #f3b7bb;
  }
  .strip { width: 160px; height: 8px; margin-top: 1px; background: #7f7f7f; }
  .caption { margin-top: auto; }

  .canvas {
    position: relative;
    display: flex;
    justify-content: center;
    flex: 1;
    min-width: 0;
    overflow: hidden;
  }
  .page {
    --para-gap: 2px;
    --indent: 28px;
    flex: none;
    box-sizing: border-box;
    width: 642px;
    margin-top: 7px;
    padding: 90px 97px 0;
    background: #fff;
    box-shadow: 0 0 12px 2px #bfc1c5;
    color: #4a4a4a;
    font-size: 13px;
    font-weight: 300;
    line-height: 25px;
  }
  h1, p { display: block; margin: 0; }
  .page h1 {
    margin-bottom: 12px;
    color: #000;
    font-size: 17px;
    line-height: 34px;
    font-weight: 900;
  }
  p + p { margin-top: var(--para-gap); }
  .line {
    display: block;
    text-align: justify;
    text-align-last: justify;
    white-space: nowrap;
  }
  .tight { font-feature-settings: 'halt'; }
  .first { padding-left: var(--indent); }
  .last { text-align-last: left; }
  .num { line-height: 1; }
  p .num {
    color: #f02020;
    font-family: 'Liberation Serif', serif;
    font-weight: 400;
  }
  .mini {
    --para-gap: 3px;
    --indent: 7px;
    display: block;
    padding: 22px 23px 0;
    color: #222;
    font-size: 3px;
    line-height: 6px;
    font-weight: 700;
  }
  .mini h1 {
    margin-bottom: 5px;
    color: #000;
    font-size: 4px;
    line-height: 8px;
    font-weight: 900;
  }
  .second { padding-top: 20px; }
  .sign { display: block; margin-top: 18px; text-align: left; color: #000; }

  .convert {
    position: absolute;
    top: 11px;
    right: 5px;
    width: 28px;
    height: 28px;
    justify-content: center;
    border-radius: 50%;
    background: #3d80ec;
  }
  .scrollbar {
    display: flex;
    flex-direction: column;
    align-items: center;
    width: 14px;
    padding: 9px 0 5px;
    background: #e8e9ed;
  }
  .grip {
    width: 11px;
    height: 46%;
    margin: 9px 0 auto;
    border-radius: 6px;
    background: #d2d4d9;
  }

  footer {
    display: flex;
    align-items: center;
    height: 29px;
    padding: 0 14px;
    border-top: 1px solid #dfe1e5;
    background: #f5f6f8;
  }
  footer .sep { height: 14px; }
  .nav-button { gap: 4px; margin-right: 15px; }
  .pager { display: flex; align-items: center; gap: 8px; padding: 0 13px; }
  .pager .page-input { width: 110px; margin: 0 6px; }
  .history { display: flex; gap: 8px; padding: 0 5px 0 15px; }
  .status-right {
    display: flex;
    align-items: center;
    gap: 10px;
    margin-left: auto;
  }
  .eye-button { gap: 4px; margin-right: 5px; }
  .square {
    width: 24px;
    height: 24px;
    justify-content: center;
  }
  .pair { display: flex; gap: 2px; }
  .present {
    width: 24px;
    height: 18px;
    margin: 0 5px;
    justify-content: center;
    border-radius: 2px;
    background: #6c7a94;
  }
  .fits { display: flex; gap: 10px; padding: 0 0 0 4px; }
  .percent { gap: 6px; margin-left: -5px; }
  .zoom-range { width: 130px; }
  .zoom-range::-webkit-slider-thumb { background: #ece96a; }
  .expand { margin-left: 8px; }

  .pointer { position: absolute; left: 466px; top: 62px; pointer-events: none; }
  .ime {
    position: absolute;
    right: 3px;
    top: 734px;
    display: flex;
    align-items: center;
  }
  .ime-logo { z-index: 1; }
  .ime-bar {
    display: flex;
    align-items: center;
    gap: 10px;
    box-sizing: border-box;
    height: 26px;
    margin-left: -6px;
    padding: 0 5px 0 10px;
    border: 1px solid #a5cbf2;
    background: #fff;
  }
  .ime-mode { color: #0f6ac8; font-size: 15px; font-weight: 700; }

  .monitor {
    position: absolute;
    right: 209px;
    bottom: 43px;
    display: flex;
    align-items: center;
  }
  .speeds {
    box-sizing: border-box;
    width: 80px;
    height: 42px;
    margin-right: -22px;
    padding-left: 11px;
    border-radius: 21px 0 0 21px;
    background: #2d303a;
    box-shadow: 0 0 6px #8a8c92;
    color: #fff;
  }
  .speeds span { display: flex; align-items: center; gap: 8px; height: 21px; }
  .speeds small { margin-left: -8px; color: #85878f; font-size: 10px; }
  .dial {
    position: relative;
    width: 60px;
    height: 60px;
    border-radius: 50%;
    background: #53535f;
    box-shadow: 0 0 6px #8a8c92;
  }
  .load {
    position: absolute;
    inset: 0;
    display: flex;
    align-items: center;
    justify-content: center;
    padding-left: 4px;
    color: #fff;
    font-size: 24px;
    font-weight: 300;
  }
  .load small { padding-top: 8px; font-size: 10px; }
  .activation {
    position: absolute;
    right: 92px;
    bottom: 49px;
    width: 198px;
    color: rgba(140, 142, 148, 0.75);
    font-size: 14px;
    line-height: 24px;
    white-space: nowrap;
    pointer-events: none;
  }
  .act-title { font-size: 21px; }
  .site-mark {
    position: absolute;
    right: 10px;
    bottom: 9px;
    display: flex;
    align-items: center;
    gap: 1px;
    pointer-events: none;
    opacity: 0.8;
  }
  .site-name { color: #5b9bd6; font-size: 21px; line-height: 26px; font-weight: 700; }
  .site-url { color: #4fae6c; font: 700 16px/16px 'Liberation Sans', sans-serif; }
</style>
